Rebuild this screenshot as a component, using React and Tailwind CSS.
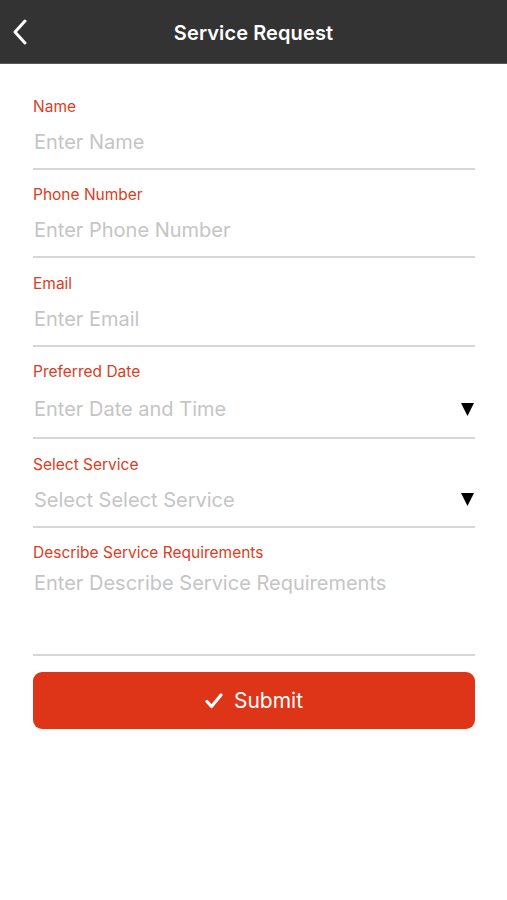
import React from 'react';

const Field = ({ label, placeholder, inputHeight = 'h-[54px]', arrow = false, multiline = false }) => {
  return (
    <div className="mb-[16.4px]">
      <div className="text-[15.5px] leading-[18px] text-[#dc3c22]">{label}</div>
      <div className={`flex ${multiline ? 'items-start pt-[8px]' : 'items-center'} ${inputHeight} border-b-2 border-[#d6d6d6]`}>
        <span className="flex-1 text-[20px] leading-[26px] text-[#c5c5c5] pl-[1px]">{placeholder}</span>
        {arrow && (
          <svg width="13" height="13" viewBox="0 0 13 13" className="mr-[1px]">
            <path d="M0 0 H13 L6.5 13 Z" fill="#000" />
          </svg>
        )}
      </div>
    </div>
  );
};

const App = () => {
  return (
    <div className="w-[507px] h-[900px] bg-white" style={{ fontFamily: 'Inter, "Liberation Sans", sans-serif' }}>
      <div className="relative flex items-center justify-center h-[64px] pt-[2px] bg-[#333333] border-b border-[#5a5a5a]">
        <button className="absolute left-[11px] top-[19px]">
          <svg width="20" height="26" viewBox="0 0 20 26" fill="none">
            <path d="M14 2 L4 13 L14 24" stroke="#fff" strokeWidth="3" strokeLinecap="round" strokeLinejoin="round" />
          </svg>
        </button>
        <h1 className="text-[20px] font-semibold text-white tracking-[0.1px]">Service Request</h1>
      </div>

      <div className="px-[33px] pt-[34px]">
        <div className="w-[442px]">
          <Field label="Name" placeholder="Enter Name" />
          <Field label="Phone Number" placeholder="Enter Phone Number" />
          <Field label="Email" placeholder="Enter Email" />
          <Field label="Preferred Date" placeholder="Enter Date and Time" inputHeight="h-[58px]" arrow />
          <Field label="Select Service" placeholder="Select Select Service" arrow />
          <Field
            label="Describe Service Requirements"
            placeholder="Enter Describe Service Requirements"
            inputHeight="h-[94px]"
            multiline
          />

          <button className="w-full h-[57px] rounded-[9px] bg-[#de3418] flex items-center justify-center gap-[11px] text-white text-[21px]">
            <svg width="18" height="16" viewBox="0 0 18 16" fill="none">
              <path d="M2 8.5 L6.5 13.5 L16 2" stroke="#fff" strokeWidth="3.2" strokeLinecap="round" strokeLinejoin="round" />
            </svg>
            <span>Submit</span>
          </button>
        </div>
      </div>
    </div>
  );
};

export default App;
